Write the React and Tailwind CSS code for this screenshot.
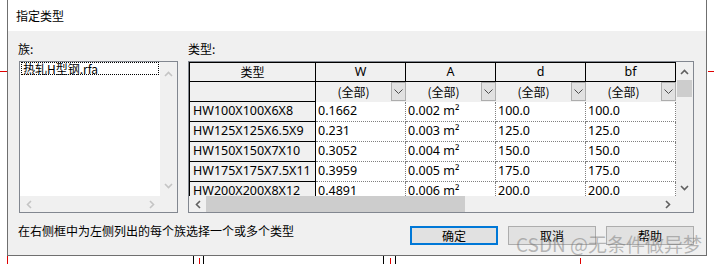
import React from "react";

const cjk = "font-['Noto_Sans_CJK_SC',sans-serif]";
const latin = "font-['Noto_Sans','Noto_Sans_CJK_SC',sans-serif]";

function Up({ color = "#606060" }) {
  return (
    <svg width="9" height="6" viewBox="0 0 9 6">
      <path d="M1 5 L4.5 1.5 L8 5" stroke={color} strokeWidth="1.6" fill="none" />
    </svg>
  );
}
function Down({ color = "#606060" }) {
  return (
    <svg width="9" height="6" viewBox="0 0 9 6">
      <path d="M1 1 L4.5 4.5 L8 1" stroke={color} strokeWidth="1.6" fill="none" />
    </svg>
  );
}
function Left({ color = "#606060" }) {
  return (
    <svg width="6" height="9" viewBox="0 0 6 9">
      <path d="M5 1 L1.5 4.5 L5 8" stroke={color} strokeWidth="1.6" fill="none" />
    </svg>
  );
}
function Right({ color = "#606060" }) {
  return (
    <svg width="6" height="9" viewBox="0 0 6 9">
      <path d="M1 1 L4.5 4.5 L1 8" stroke={color} strokeWidth="1.6" fill="none" />
    </svg>
  );
}
function DropChev() {
  return (
    <svg width="9" height="5" viewBox="0 0 9 5">
      <path d="M0.5 0.5 L4.5 4.5 L8.5 0.5" stroke="#4d4d4d" strokeWidth="1" fill="none" />
    </svg>
  );
}

const rows = [
  ["HW100X100X6X8", "0.1662", "0.002 m²", "100.0", "100.0"],
  ["HW125X125X6.5X9", "0.231", "0.003 m²", "125.0", "125.0"],
  ["HW150X150X7X10", "0.3052", "0.004 m²", "150.0", "150.0"],
  ["HW175X175X7.5X11", "0.3959", "0.005 m²", "175.0", "175.0"],
  ["HW200X200X8X12", "0.4891", "0.006 m²", "200.0", "200.0"],
];

function FamilyList() {
  return (
    <div className="w-[159px] h-[152px] border border-[#828790] flex flex-col bg-white">
      <div className="flex h-[134px]">
        <div className="flex-1 bg-white">
          <div className={`ml-[1px] w-[138px] h-[13px] border border-dotted border-black flex items-center pl-[1px] text-[12px] leading-[11px] text-black ${cjk}`}>
            热轧H型钢.rfa
          </div>
        </div>
        <div className="w-[17px] bg-[#f0f0f0] flex flex-col items-center justify-between pt-[9px] pb-[7px]">
          <Up color="#c4c4c4" />
          <Down color="#c4c4c4" />
        </div>
      </div>
      <div className="flex h-[16px]">
        <div className="flex-1 bg-[#f0f0f0] flex items-center justify-between pl-[6px] pr-[5px]">
          <Left color="#c4c4c4" />
          <Right color="#c4c4c4" />
        </div>
        <div className="w-[17px] bg-[#f0f0f0]" />
      </div>
    </div>
  );
}

function TypeGrid() {
  return (
    <div className="w-[506px] h-[152px] border border-[#828790] flex flex-col bg-[#f0f0f0]">
      <div className="flex h-[134px]">
        <div className="w-[487px] overflow-hidden bg-white">
          <div className={`flex h-[20px] border-t border-b border-black bg-[#f0f0f0] text-[12.5px] text-black ${latin}`}>
            <div className={`w-[127px] border-l border-r border-black flex items-center justify-center text-[12px] ${cjk}`}>类型</div>
            {["W", "A", "d", "bf"].map((h) => (
              <div key={h} className="w-[90px] border-r border-black flex items-center justify-center">
                {h}
              </div>
            ))}
          </div>
          <div className={`flex h-[20px] bg-[#f0f0f0] text-[12px] text-black ${cjk}`}>
            <div className="w-[127px] border-l border-r border-b border-black" />
            {[0, 1, 2, 3].map((i) => (
              <div key={i} className="w-[90px] flex items-start">
                <div className="flex-1 h-[19px] flex items-center justify-center">(全部)</div>
                <div className="w-[15px] h-[19px] border border-[#adadad] bg-[#e1e1e1] flex items-center justify-center">
                  <DropChev />
                </div>
              </div>
            ))}
          </div>
          {rows.map((r) => (
            <div key={r[0]} className={`flex h-[20px] text-[12.5px] text-black ${latin}`}>
              <div className="w-[127px] border-l border-r border-b border-black bg-[#f0f0f0] flex items-center pl-[3px] whitespace-nowrap">
                {r[0]}
              </div>
              {r.slice(1).map((c, i) => (
                <div key={i} className="w-[90px] border-r border-b border-dotted border-[#808080] bg-white flex items-center pl-[2px] whitespace-nowrap">
                  {c}
                </div>
              ))}
            </div>
          ))}
        </div>
        <div className="w-[17px] bg-[#f0f0f0] flex flex-col">
          <div className="h-[18px] flex items-end justify-center pb-[5px]">
            <Up />
          </div>
          <div className="h-[17px] mx-[1px] bg-[#cdcdcd]" />
          <div className="flex-1" />
          <div className="h-[17px] flex items-center justify-center">
            <Down />
          </div>
        </div>
      </div>
      <div className="flex h-[16px]">
        <div className="w-[487px] bg-[#f0f0f0] flex items-center">
          <div className="w-[17px] h-full flex items-center justify-center">
            <Left />
          </div>
          <div className="w-[259px] h-full bg-[#cdcdcd]" />
          <div className="flex-1" />
          <div className="w-[17px] h-full flex items-center justify-center">
            <Right />
          </div>
        </div>
        <div className="w-[17px] bg-[#f0f0f0]" />
      </div>
    </div>
  );
}

export default function App() {
  return (
    <div className="relative w-[714px] h-[264px] bg-white overflow-hidden flex flex-col">
      <div className="flex h-[256px]">
        <div className="w-[7px] h-full">
          <svg width="7" height="256">
            <line x1="0" y1="71.5" x2="7" y2="71.5" stroke="#e00000" strokeWidth="1" />
          </svg>
        </div>
        <div className={`w-[700px] h-full border-l border-r border-b border-[#6f6f6f] flex flex-col ${cjk}`}>
          <div className="h-[31px] bg-white flex items-center pl-[8px] text-[12px] text-black">指定类型</div>
          <div className="flex-1 bg-[#f0f0f0] flex flex-col pl-[11px] pr-[12px] pt-[9px]">
            <div className="flex gap-[10px]">
              <div className="flex flex-col">
                <div className="h-[18px] leading-[18px] text-[12px] text-black -ml-[1px] mb-[3px]">族:</div>
                <FamilyList />
              </div>
              <div className="flex flex-col">
                <div className="h-[18px] leading-[18px] text-[12px] text-black mb-[3px]">类型:</div>
                <TypeGrid />
              </div>
            </div>
            <div className="flex items-start">
              <div className="mt-[11px] leading-[14px] text-[12px] text-black -ml-[1px]">在右侧框中为左侧列出的每个族选择一个或多个类型</div>
              <div className="ml-auto mt-[13px] flex gap-[10px]">
                <div className="w-[88px] h-[19px] border-2 border-[#0078d7] bg-[#e1e1e1] flex items-center justify-center text-[12px] text-black">确定</div>
                <div className="w-[88px] h-[19px] border border-[#adadad] bg-[#e1e1e1] flex items-center justify-center text-[12px] text-black">取消</div>
                <div className="w-[88px] h-[19px] border border-[#adadad] bg-[#e1e1e1] flex items-center justify-center text-[12px] text-black">帮助</div>
              </div>
            </div>
          </div>
        </div>
        <div className="w-[7px] h-full">
          <svg width="7" height="256">
            <line x1="1" y1="71.5" x2="7" y2="71.5" stroke="#e00000" strokeWidth="1" />
          </svg>
        </div>
      </div>
      <div className="h-[8px]">
        <svg width="714" height="8">
          <line x1="7.5" y1="0" x2="7.5" y2="8" stroke="#e00000" />
          <line x1="193.5" y1="0" x2="193.5" y2="8" stroke="#000" />
          <line x1="199.5" y1="2" x2="199.5" y2="8" stroke="#e00000" />
          <line x1="203.5" y1="0" x2="203.5" y2="8" stroke="#000" />
          <line x1="383.5" y1="0" x2="383.5" y2="8" stroke="#000" />
          <line x1="390.5" y1="2" x2="390.5" y2="8" stroke="#e00000" />
          <line x1="395.5" y1="0" x2="395.5" y2="8" stroke="#000" />
          <line x1="580.5" y1="2" x2="580.5" y2="8" stroke="#e00000" />
        </svg>
      </div>
      <div className={`absolute left-[516px] top-[233px] text-[19px] leading-[22px] text-[rgba(120,120,120,0.5)] whitespace-nowrap ${cjk}`}>
        CSDN @无条件做异梦
      </div>
    </div>
  );
}
